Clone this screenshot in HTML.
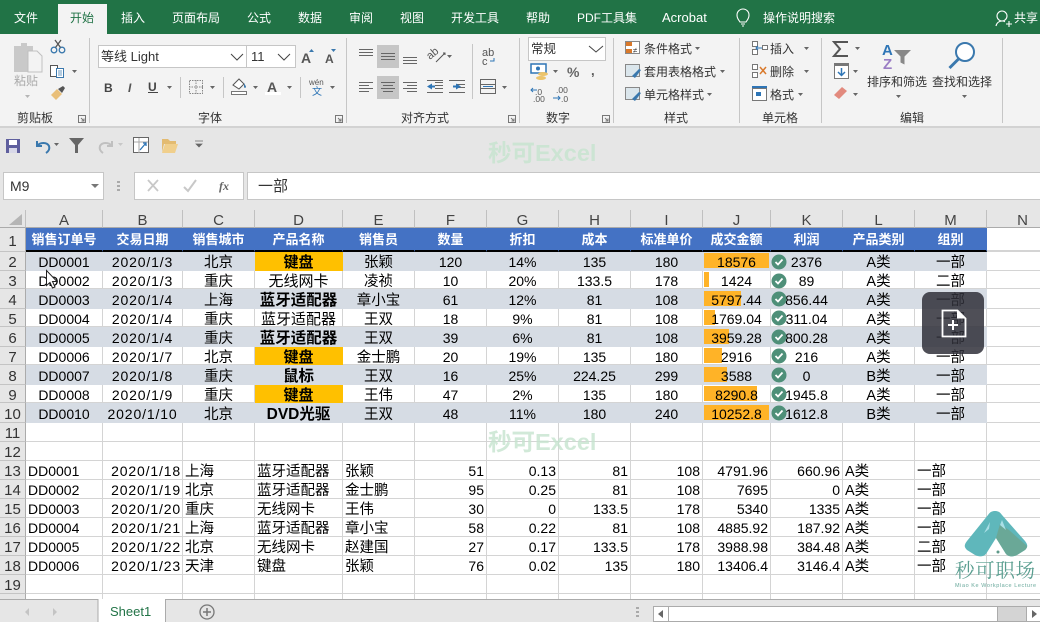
<!DOCTYPE html>
<html lang="zh"><head><meta charset="utf-8"><title>Excel</title>
<style>
html,body{margin:0;padding:0;width:1040px;height:622px;overflow:hidden;background:#fff}
body{position:relative;font-family:"Liberation Sans","Noto Sans CJK SC",sans-serif;color:#000}
svg{position:absolute;left:0;top:0}
svg text{font-family:"Liberation Sans","Noto Sans CJK SC",sans-serif}
#sheet{position:absolute;left:0;top:210px;width:1059px;height:389px;overflow:hidden}
table{border-collapse:separate;border-spacing:0;table-layout:fixed;width:1059px;font-size:14px}
td{padding:2px 0 0;box-sizing:border-box;border-right:1px solid #d4d4d4;border-bottom:1px solid #d4d4d4;line-height:12px;text-align:center;white-space:nowrap;overflow:hidden;vertical-align:middle;font-size:14px}
td.h{background:#e6e6e6;color:#333;border-right:1px solid #ababab;border-bottom:1px solid #c4c4c4;font-size:15px;padding-top:4px}
tr.c td{background:#e6e6e6;color:#444;border-right:1px solid #c0c0c0;border-bottom:1px solid #ababab;font-size:15px;padding-top:4px}
tr.t td{background:#4472c4;color:#fff;font-weight:bold;font-size:13px;border-right-color:#4472c4;border-bottom:2px solid #000}
tr.t td.h{background:#e6e6e6;color:#333;font-weight:normal;font-size:15px;border-right:1px solid #ababab;border-bottom:1px solid #c4c4c4}
tr.g td{background:#d6dce4;border-right-color:#d6dce4;border-bottom-color:#d6dce4}
tr.g td.h{background:#e6e6e6;border-right:1px solid #ababab;border-bottom:1px solid #c4c4c4}
tr.t td.n,tr.g td.n{background:#fff;border-right-color:#d4d4d4;border-bottom-color:#d4d4d4;color:#000;font-weight:normal}
td.o{background:#ffc000!important;border-right-color:#ffc000!important;border-bottom-color:#ffc000!important;font-weight:bold;font-size:15px;padding-top:4px}
td.b{font-weight:bold;font-size:15.5px;padding-top:4px}
td.z{font-size:14.5px;padding-top:4px}
td.y{font-size:15px;padding-top:4px}
td.l{text-align:left;padding-left:2px;font-size:14.5px;padding-top:4px}
td.ln{text-align:left;padding-left:2px}
td.r{text-align:right;padding-right:2px}
td.d{letter-spacing:.85px}
td.r.d{padding-right:1px}
.wm{position:absolute;color:#c6e4cf;font-weight:bold;font-size:23.5px;left:488px;white-space:nowrap;opacity:.8;line-height:26px;z-index:3}
#over{position:absolute;left:922px;top:292px;width:62px;height:62px;border-radius:8px;background:rgba(48,48,58,.85);z-index:6}
#tabs{position:absolute;left:0;top:599px;width:1040px;height:23px;background:#e6e6e6;border-top:1px solid #ababab;box-sizing:border-box;z-index:5}
</style></head><body>

<svg width="1040" height="210" viewBox="0 0 1040 210" style="z-index:1">
<rect width="1040" height="210" fill="#e6e6e6"/>
<rect width="1040" height="34" fill="#217346"/>
<rect y="34" width="1040" height="92" fill="#f3f3f3"/>
<rect y="126" width="1040" height="2" fill="#d2d2d2"/>
<rect x="58" y="4" width="49" height="31" fill="#f3f3f3"/>
<g font-size="12" fill="#fff">
<text x="14" y="22">文件</text><text x="70" y="22" fill="#217346">开始</text><text x="121" y="22">插入</text><text x="172" y="22">页面布局</text><text x="247" y="22">公式</text><text x="298" y="22">数据</text><text x="349" y="22">审阅</text><text x="400" y="22">视图</text><text x="451" y="22">开发工具</text><text x="526" y="22">帮助</text><text x="577" y="22">PDF工具集</text><text x="662" y="22" font-size="13">Acrobat</text><text x="763" y="22">操作说明搜索</text><text x="1014" y="22">共享</text>
</g>
<!-- bulb / user -->
<g fill="none" stroke="#fff" stroke-width="1.1">
<path d="M740 22c-1-2-3-3-3-7a6 6 0 0 1 12 0c0 4-2 5-3 7z"/><path d="M741 24h4M742 26h2"/>
<circle cx="1002" cy="16" r="5"/><path d="M996 26c.5-3 3-5 6-5 1 0 2 .2 3 .7"/><path d="M1006 24h6M1009 21v6"/>
</g>
<!-- separators -->
<g fill="#c6c6c6"><rect x="89" y="38" width="1" height="85"/><rect x="346" y="38" width="1" height="85"/><rect x="519" y="38" width="1" height="85"/><rect x="613" y="38" width="1" height="85"/><rect x="739" y="38" width="1" height="85"/><rect x="821" y="38" width="1" height="85"/><rect x="1002" y="38" width="1" height="85"/>
<rect x="180" y="77" width="1" height="21"/><rect x="223" y="77" width="1" height="21"/><rect x="300" y="77" width="1" height="21"/><rect x="472" y="44" width="1" height="55"/></g>
<!-- group labels -->
<g font-size="12" fill="#333"><text x="17" y="122">剪贴板</text><text x="198" y="122">字体</text><text x="401" y="122">对齐方式</text><text x="546" y="122">数字</text><text x="664" y="122">样式</text><text x="762" y="122">单元格</text><text x="900" y="122">编辑</text></g>
<!-- launchers -->
<g fill="none" stroke="#777" stroke-width="1"><path d="M78.500 115.500h7v7h-7zM81 118l3 3M84 118.500v2.500h-2.500"/><path d="M335.500 115.500h7v7h-7zM338 118l3 3M341 118.500v2.500h-2.500"/><path d="M508.500 115.500h7v7h-7zM511 118l3 3M514 118.500v2.500h-2.500"/><path d="M602.500 115.500h7v7h-7zM605 118l3 3M608 118.500v2.500h-2.500"/></g>
<!-- clipboard -->
<path d="M14 46h7v-3h6v3h6v26H14z" fill="#c9c9c9"/><path d="M28 51h9l5 5v16H28z" fill="#f3f3f3" stroke="#c0c0c0"/>
<text x="14" y="85" font-size="12" fill="#aaa">粘贴</text><path d="M25 95h5l-2.500 3z" fill="#b5b5b5"/>
<g fill="none" stroke="#3a78ad" stroke-width="1.300"><circle cx="54" cy="50" r="2.800"/><circle cx="62" cy="50" r="2.800"/></g><path d="M55.500 47.500L61 40M60.500 47.500L55 40" stroke="#555" stroke-width="1.300"/>
<path d="M50.500 65.500h7v11h-7z" fill="#fff" stroke="#555"/><path d="M56.500 68.500h7v9h-7z" fill="#fff" stroke="#3a78ad"/><path d="M58 71h4M58 73h4M58 75h4" stroke="#3a78ad" stroke-width=".8"/><path d="M72 70h5l-2.500 3z" fill="#666"/>
<path d="M51 95l6-6 5 5-6 6z" fill="#e9bf79"/><path d="M58 89l5-3 2 2-3 5z" fill="#555"/>
<!-- font -->
<rect x="98.500" y="45.500" width="197" height="22" fill="#fff" stroke="#c6c6c6"/><rect x="246" y="46" width="1" height="21" fill="#c6c6c6"/>
<text x="101" y="61" font-size="13" fill="#333">等线 Light</text><text x="251" y="61" font-size="13" fill="#333">11</text>
<path d="M231 54l6 6 6-6M278 54l6 6 6-6" fill="none" stroke="#444"/>
<text x="301" y="63" font-size="14" font-weight="bold" fill="#555">A</text><path d="M309 52l2.500-3 2.500 3z" fill="#3a78ad"/>
<text x="325" y="63" font-size="12" font-weight="bold" fill="#555">A</text><path d="M331 49h5l-2.500 3z" fill="#3a78ad"/>
<text x="104" y="92" font-size="12" font-weight="bold" fill="#444">B</text><text x="128" y="92" font-size="12" font-style="italic" font-weight="bold" fill="#555">I</text><text x="148" y="91" font-size="12" font-weight="bold" fill="#444">U</text><rect x="148" y="92" width="10" height="1" fill="#444"/>
<path d="M167 86h5l-2.500 3zM210 86h5l-2.500 3zM253 86h5l-2.500 3zM287 86h5l-2.500 3zM330 86h5l-2.500 3z" fill="#666"/>
<path d="M189.500 80.500h13v13h-13zM196 80v14M189 87h14" fill="none" stroke="#888" stroke-dasharray="1.500 1"/>
<path d="M233 85l6-6 5 5-5 5z" fill="#fff" stroke="#555"/><path d="M244 83c1 2 2 3 2 4s-2 1-2 0z" fill="#3a78ad"/><rect x="231.500" y="91.500" width="15" height="3" fill="#fff" stroke="#777"/>
<text x="267" y="92" font-size="14" font-weight="bold" fill="#555">A</text><rect x="265" y="92" width="16" height="3" fill="#fff"/>
<text x="309" y="85" font-size="8" fill="#555">wén</text><text x="312" y="95" font-size="10" fill="#2e75b6">文</text>
<!-- alignment -->
<rect x="377" y="45" width="22" height="23" fill="#c6c6c6"/><rect x="377" y="76" width="22" height="23" fill="#c6c6c6"/>
<g stroke="#666" stroke-width="1" fill="none">
<path d="M359 49.500h14M359 52.500h14M359 55.500h14"/><path d="M381 53.500h14M381 56.500h14M381 59.500h14"/><path d="M403 57.500h14M403 60.500h14M403 63.500h14"/>
<path d="M359 82.500h14M359 85.500h10M359 88.500h14M359 91.500h10"/><path d="M381 82.500h14M383 85.500h10M381 88.500h14M383 91.500h10"/><path d="M403 82.500h14M407 85.500h10M403 88.500h14M407 91.500h10"/>
<path d="M435 82.500h8M435 85.500h8M435 88.500h8M427 92.500h16M427 80.500h16"/><path d="M449 80.500h16M457 84.500h8M457 87.500h8M449 92.500h16"/>
<path d="M480.500 79.500h15v14h-15zM480 84.500h16M480 88.500h16"/>
</g>
<path d="M427 86.500l5-3v2h3v2h-3v2z" fill="#2e75b6"/><path d="M455 86.500l-5-3v2h-3v2h3v2z" fill="#2e75b6" transform="translate(6 0)"/>
<path d="M483 86.500h10" stroke="#2e75b6"/>
<text x="0" y="0" font-size="11" fill="#555" transform="translate(430 60) rotate(-40)">ab</text><path d="M436 62l9-9M443 53h2v2" fill="none" stroke="#555"/>
<text x="482" y="56" font-size="11" fill="#555">ab</text><text x="482" y="65" font-size="11" fill="#555">c</text><path d="M494 58v3h-4" fill="none" stroke="#2e75b6"/>
<path d="M447 55h5l-2.500 3zM502 86h5l-2.500 3z" fill="#666"/>
<!-- number -->
<rect x="528.500" y="37.500" width="77" height="23" fill="#fff" stroke="#c6c6c6"/><text x="531" y="53" font-size="12.500" fill="#333">常规</text><path d="M589 46l7 6 7-6" fill="none" stroke="#444"/>
<rect x="531" y="64" width="15" height="9" fill="#fff" stroke="#2e75b6" stroke-width="1.500"/><circle cx="538" cy="68.500" r="2" fill="#2e75b6"/><ellipse cx="543" cy="74" rx="5" ry="2" fill="#ecc46b"/><ellipse cx="541" cy="78" rx="5" ry="2" fill="#ecc46b"/>
<path d="M553 70h5l-2.500 3z" fill="#666"/><text x="567" y="77" font-size="14" font-weight="bold" fill="#666">%</text><text x="591" y="75" font-size="13" font-weight="bold" fill="#555">,</text>
<text x="535" y="95" font-size="8.500" fill="#555">.0</text><text x="533" y="102" font-size="8.500" fill="#555">.00</text><path d="M531 90h6M533 88l-2 2 2 2" fill="none" stroke="#2e75b6"/>
<text x="556" y="93" font-size="8.500" fill="#555">.00</text><text x="561" y="102" font-size="8.500" fill="#555">.0</text><path d="M553 98h7M558 96l2 2-2 2" fill="none" stroke="#2e75b6"/>
<!-- styles -->
<g font-size="12" fill="#333"><text x="644" y="53">条件格式</text><text x="644" y="76">套用表格格式</text><text x="644" y="99">单元格样式</text></g>
<rect x="625.500" y="41.500" width="14" height="12" fill="#fff" stroke="#888"/><rect x="626" y="42" width="6" height="4" fill="#d9792b"/><rect x="626" y="49" width="6" height="4" fill="#d9792b"/><text x="633" y="53" font-size="8" fill="#444">≠</text>
<rect x="625.500" y="64.500" width="14" height="12" fill="#dbe6ec" stroke="#888"/><path d="M632 76l7-7 2 1-6 8z" fill="#3a78ad"/>
<rect x="625.500" y="87.500" width="14" height="12" fill="#dbe6ec" stroke="#888"/><path d="M632 99l7-7 2 1-6 8z" fill="#3a78ad"/>
<path d="M695 47h5l-2.500 3zM720 70h5l-2.500 3zM707 93h5l-2.500 3z" fill="#666"/>
<!-- cells -->
<g font-size="12" fill="#333"><text x="770" y="53">插入</text><text x="770" y="76">删除</text><text x="770" y="99">格式</text></g>
<path d="M752.500 41.500h5v5h-5zM752.500 49.500h5v5h-5zM762.500 45.500h5v4h-5z" fill="#fff" stroke="#777"/><path d="M756 48h6M758 46l-2 2 2 2" fill="none" stroke="#2e75b6"/>
<path d="M752.500 64.500h5v5h-5zM752.500 72.500h5v5h-5z" fill="#fff" stroke="#777"/><path d="M760 67l6 7M766 67l-6 7" stroke="#d9792b" stroke-width="1.500"/>
<rect x="752.500" y="88.500" width="14" height="12" fill="#fff" stroke="#777"/><rect x="752" y="86" width="15" height="2" fill="#2e75b6"/><rect x="756" y="92" width="5" height="4" fill="#2e75b6"/>
<path d="M804 47h5l-2.500 3zM804 70h5l-2.500 3zM798 93h5l-2.500 3z" fill="#666"/>
<!-- editing -->
<path d="M848 42h-14l6 7-6 7h14" fill="none" stroke="#555" stroke-width="2"/>
<rect x="834.500" y="63.500" width="14" height="15" fill="#fff" stroke="#777"/><rect x="834" y="63" width="15" height="3" fill="#777"/><path d="M841.500 68v7M838 72l3.500 3.500 3.500-3.500" fill="none" stroke="#2e75b6" stroke-width="1.500"/>
<path d="M834 95l8-8 5 4-8 8z" fill="#e28a7e"/>
<path d="M855 47h5l-2.500 3zM853 70h5l-2.500 3zM853 93h5l-2.500 3z" fill="#666"/>
<text x="882" y="55" font-size="15" font-weight="bold" fill="#2e75b6">A</text><text x="883" y="69" font-size="15" font-weight="bold" fill="#9a7dc4">Z</text>
<path d="M894 50h17l-6.500 6.500v8l-4-2v-6z" fill="#888"/>
<g font-size="12" fill="#333"><text x="867" y="86">排序和筛选</text><text x="932" y="86">查找和选择</text></g>
<circle cx="965" cy="52" r="9" fill="#fff" stroke="#3a78ad" stroke-width="2"/><path d="M958.500 59l-9 9" stroke="#3a78ad" stroke-width="3"/>
<path d="M896 95h5l-2.500 3zM962 95h5l-2.500 3z" fill="#666"/>
<!-- QAT -->
<path d="M6 139h14v14H6z" fill="#5f5f9e"/><rect x="9" y="140" width="8" height="5" fill="#fff"/><rect x="9" y="148" width="8" height="5" fill="#d8d8e8"/>
<path d="M37 141v5h5M37 146c3-4 10-4 12 0 1 3 0 5-3 7" fill="none" stroke="#3a78ad" stroke-width="2"/><path d="M54 143h5l-2.500 3z" fill="#666"/>
<path d="M69 138h15l-6 7v8h-3v-8z" fill="#666"/>
<path d="M112 141v5h-5M112 146c-3-4-10-4-12 0-1 3 0 5 3 7" fill="none" stroke="#c0c0c0" stroke-width="2"/><path d="M118 143h5l-2.500 3z" fill="#c8c8c8"/>
<rect x="133.500" y="137.500" width="15" height="15" fill="#fff" stroke="#666"/><path d="M134 142h14M139 138v15" stroke="#aaa"/><path d="M140 150l6-7M143 143h3v3" fill="none" stroke="#2e75b6" stroke-width="1.300"/>
<path d="M162 152v-13h6l2 2h6v3h-12z" fill="#e3bb71"/><path d="M162 153l3-9h13l-3 9z" fill="#f0cf8c"/>
<path d="M195 141h8M196 144h6l-3 3z" fill="#666" stroke="#666" stroke-width=".7"/>
<!-- formula bar -->
<rect x="3" y="172" width="100" height="27" fill="#fff"/><rect x="3.500" y="172.500" width="100" height="27" fill="#fff" stroke="#c6c6c6"/><text x="10" y="191" font-size="14" fill="#333">M9</text><path d="M91 184h8l-4 4z" fill="#777"/>
<g fill="#aaa"><rect x="117" y="181" width="3" height="2"/><rect x="117" y="185" width="3" height="2"/><rect x="117" y="189" width="3" height="2"/></g>
<rect x="134.500" y="172.500" width="109" height="27" fill="#fff" stroke="#c6c6c6"/><rect x="247.500" y="172.500" width="800" height="27" fill="#fff" stroke="#c6c6c6"/>
<path d="M148 180l10 11M158 180l-10 11" stroke="#c8c8c8" stroke-width="1.800"/><path d="M184 187l4 4 8-11" fill="none" stroke="#c8c8c8" stroke-width="2"/>
<text x="219" y="190" font-size="12" font-style="italic" font-weight="bold" fill="#666" style="font-family:'Liberation Serif',serif">fx</text>
<text x="258" y="191" font-size="15" fill="#333">一部</text>
</svg>

<div id="sheet" style="z-index:1">
<table>
<colgroup><col style="width:26px"><col style="width:77px"><col style="width:80px"><col style="width:72px"><col style="width:88px"><col style="width:72px"><col style="width:72px"><col style="width:72px"><col style="width:72px"><col style="width:72px"><col style="width:68px"><col style="width:72px"><col style="width:72px"><col style="width:72px"><col style="width:72px"></colgroup>
<tr class="c" style="height:18px"><td></td><td>A</td><td>B</td><td>C</td><td>D</td><td>E</td><td>F</td><td>G</td><td>H</td><td>I</td><td>J</td><td>K</td><td>L</td><td>M</td><td>N</td></tr>
<tr class="t" style="height:24px"><td class="h">1</td><td>销售订单号</td><td>交易日期</td><td>销售城市</td><td>产品名称</td><td>销售员</td><td>数量</td><td>折扣</td><td>成本</td><td>标准单价</td><td>成交金额</td><td>利润</td><td>产品类别</td><td>组别</td><td class="n"></td></tr>
<tr class="g" style="height:19px"><td class="h">2</td><td>DD0001</td><td class="d">2020/1/3</td><td class="z">北京</td><td class="o">键盘</td><td class="z">张颖</td><td>120</td><td>14%</td><td>135</td><td>180</td><td style="background:#d6dce4 linear-gradient(#ffb327,#ffb327) no-repeat 1px 1px/65px 15px">18576</td><td>2376</td><td class="z">A类</td><td class="z">一部</td><td class="n"></td></tr>
<tr style="height:18px"><td class="h">3</td><td>DD0002</td><td class="d">2020/1/3</td><td class="z">重庆</td><td class="y">无线网卡</td><td class="z">凌祯</td><td>10</td><td>20%</td><td>133.5</td><td>178</td><td style="background:#fff linear-gradient(#ffb327,#ffb327) no-repeat 1px 1px/5px 15px">1424</td><td>89</td><td class="z">A类</td><td class="z">二部</td><td></td></tr>
<tr class="g" style="height:20px"><td class="h">4</td><td>DD0003</td><td class="d">2020/1/4</td><td class="z">上海</td><td class="b">蓝牙适配器</td><td class="z">章小宝</td><td>61</td><td>12%</td><td>81</td><td>108</td><td style="background:#d6dce4 linear-gradient(#ffb327,#ffb327) no-repeat 1px 2px/37px 15px">5797.44</td><td>856.44</td><td class="z">A类</td><td class="z">一部</td><td class="n"></td></tr>
<tr style="height:18px"><td class="h">5</td><td>DD0004</td><td class="d">2020/1/4</td><td class="z">重庆</td><td class="y">蓝牙适配器</td><td class="z">王双</td><td>18</td><td>9%</td><td>81</td><td>108</td><td style="background:#fff linear-gradient(#ffb327,#ffb327) no-repeat 1px 1px/11px 15px">1769.04</td><td>311.04</td><td class="z">A类</td><td class="z">一部</td><td></td></tr>
<tr class="g" style="height:20px"><td class="h">6</td><td>DD0005</td><td class="d">2020/1/4</td><td class="z">重庆</td><td class="b">蓝牙适配器</td><td class="z">王双</td><td>39</td><td>6%</td><td>81</td><td>108</td><td style="background:#d6dce4 linear-gradient(#ffb327,#ffb327) no-repeat 1px 2px/25px 15px">3959.28</td><td>800.28</td><td class="z">A类</td><td class="z">一部</td><td class="n"></td></tr>
<tr style="height:18px"><td class="h">7</td><td>DD0006</td><td class="d">2020/1/7</td><td class="z">北京</td><td class="o">键盘</td><td class="z">金士鹏</td><td>20</td><td>19%</td><td>135</td><td>180</td><td style="background:#fff linear-gradient(#ffb327,#ffb327) no-repeat 1px 1px/18px 15px">2916</td><td>216</td><td class="z">A类</td><td class="z">一部</td><td></td></tr>
<tr class="g" style="height:20px"><td class="h">8</td><td>DD0007</td><td class="d">2020/1/8</td><td class="z">重庆</td><td class="b">鼠标</td><td class="z">王双</td><td>16</td><td>25%</td><td>224.25</td><td>299</td><td style="background:#d6dce4 linear-gradient(#ffb327,#ffb327) no-repeat 1px 2px/23px 15px">3588</td><td>0</td><td class="z">B类</td><td class="z">一部</td><td class="n"></td></tr>
<tr style="height:18px"><td class="h">9</td><td>DD0008</td><td class="d">2020/1/9</td><td class="z">重庆</td><td class="o">键盘</td><td class="z">王伟</td><td>47</td><td>2%</td><td>135</td><td>180</td><td style="background:#fff linear-gradient(#ffb327,#ffb327) no-repeat 1px 1px/53px 15px">8290.8</td><td>1945.8</td><td class="z">A类</td><td class="z">一部</td><td></td></tr>
<tr class="g" style="height:20px"><td class="h">10</td><td>DD0010</td><td class="d">2020/1/10</td><td class="z">北京</td><td class="b">DVD光驱</td><td class="z">王双</td><td>48</td><td>11%</td><td>180</td><td>240</td><td style="background:#d6dce4 linear-gradient(#ffb327,#ffb327) no-repeat 1px 2px/65px 15px">10252.8</td><td>1612.8</td><td class="z">B类</td><td class="z">一部</td><td class="n"></td></tr>
<tr style="height:19px"><td class="h">11</td><td></td><td></td><td></td><td></td><td></td><td></td><td></td><td></td><td></td><td></td><td></td><td></td><td></td><td></td></tr>
<tr style="height:19px"><td class="h">12</td><td></td><td></td><td></td><td></td><td></td><td></td><td></td><td></td><td></td><td></td><td></td><td></td><td></td><td></td></tr>
<tr style="height:19px"><td class="h">13</td><td class="ln">DD0001</td><td class="r d">2020/1/18</td><td class="l">上海</td><td class="l">蓝牙适配器</td><td class="l">张颖</td><td class="r">51</td><td class="r">0.13</td><td class="r">81</td><td class="r">108</td><td class="r">4791.96</td><td class="r">660.96</td><td class="l">A类</td><td class="l">一部</td><td></td></tr>
<tr style="height:19px"><td class="h">14</td><td class="ln">DD0002</td><td class="r d">2020/1/19</td><td class="l">北京</td><td class="l">蓝牙适配器</td><td class="l">金士鹏</td><td class="r">95</td><td class="r">0.25</td><td class="r">81</td><td class="r">108</td><td class="r">7695</td><td class="r">0</td><td class="l">A类</td><td class="l">一部</td><td></td></tr>
<tr style="height:19px"><td class="h">15</td><td class="ln">DD0003</td><td class="r d">2020/1/20</td><td class="l">重庆</td><td class="l">无线网卡</td><td class="l">王伟</td><td class="r">30</td><td class="r">0</td><td class="r">133.5</td><td class="r">178</td><td class="r">5340</td><td class="r">1335</td><td class="l">A类</td><td class="l">一部</td><td></td></tr>
<tr style="height:19px"><td class="h">16</td><td class="ln">DD0004</td><td class="r d">2020/1/21</td><td class="l">上海</td><td class="l">蓝牙适配器</td><td class="l">章小宝</td><td class="r">58</td><td class="r">0.22</td><td class="r">81</td><td class="r">108</td><td class="r">4885.92</td><td class="r">187.92</td><td class="l">A类</td><td class="l">一部</td><td></td></tr>
<tr style="height:19px"><td class="h">17</td><td class="ln">DD0005</td><td class="r d">2020/1/22</td><td class="l">北京</td><td class="l">无线网卡</td><td class="l">赵建国</td><td class="r">27</td><td class="r">0.17</td><td class="r">133.5</td><td class="r">178</td><td class="r">3988.98</td><td class="r">384.48</td><td class="l">A类</td><td class="l">二部</td><td></td></tr>
<tr style="height:19px"><td class="h">18</td><td class="ln">DD0006</td><td class="r d">2020/1/23</td><td class="l">天津</td><td class="l">键盘</td><td class="l">张颖</td><td class="r">76</td><td class="r">0.02</td><td class="r">135</td><td class="r">180</td><td class="r">13406.4</td><td class="r">3146.4</td><td class="l">A类</td><td class="l">一部</td><td></td></tr>
<tr style="height:19px"><td class="h">19</td><td></td><td></td><td></td><td></td><td></td><td></td><td></td><td></td><td></td><td></td><td></td><td></td><td></td><td></td></tr>
<tr style="height:6px"><td class="h"></td><td></td><td></td><td></td><td></td><td></td><td></td><td></td><td></td><td></td><td></td><td></td><td></td><td></td><td></td></tr>
</table>
</div>

<svg width="1040" height="622" viewBox="0 0 1040 622" style="z-index:4;pointer-events:none">
<!-- corner triangle -->
<path d="M22 214v11H9z" fill="#b5b5b5"/>
<!-- status icons -->
<g>
<circle cx="779" cy="262" r="7.500" fill="#4e8f78"/><circle cx="779" cy="281" r="7.500" fill="#4e8f78"/><circle cx="779" cy="299" r="7.500" fill="#4e8f78"/><circle cx="779" cy="318" r="7.500" fill="#4e8f78"/><circle cx="779" cy="337" r="7.500" fill="#4e8f78"/><circle cx="779" cy="356" r="7.500" fill="#4e8f78"/><circle cx="779" cy="375" r="7.500" fill="#4e8f78"/><circle cx="779" cy="394" r="7.500" fill="#4e8f78"/><circle cx="779" cy="413" r="7.500" fill="#4e8f78"/>
</g>
<g fill="none" stroke="#fff" stroke-width="1.800">
<path d="M775.500 262l2.500 2.500 4.500-5"/><path d="M775.500 281l2.500 2.500 4.500-5"/><path d="M775.500 299l2.500 2.500 4.500-5"/><path d="M775.500 318l2.500 2.500 4.500-5"/><path d="M775.500 337l2.500 2.500 4.500-5"/><path d="M775.500 356l2.500 2.500 4.500-5"/><path d="M775.500 375l2.500 2.500 4.500-5"/><path d="M775.500 394l2.500 2.500 4.500-5"/><path d="M775.500 413l2.500 2.500 4.500-5"/>
</g>
<!-- cursor -->
<path d="M46.500 270.500v15l3.500-3 2.500 5.500 2.500-1-2.500-5.500h4.500z" fill="#fff" stroke="#222" stroke-width="1"/>
<!-- logo -->
<path d="M995 511c-3 0-5 1-7 4L967 541c-3 4-3 6 0 9l8 5c4 2 8 2 11-1L996 538l10 16c3 3 7 3 11 1l8-5c3-3 3-5 0-9L1002 515c-2-3-4-4-7-4z" fill="#5fb7bb"/>
<path d="M996 538l10 16c3 3 7 3 11 1l8-5c1-1 2-2 2-4l-18-16-9-6z" fill="#6aa897"/>
<path d="M990 522l-6 11 5-4zM1002 520l4 10-6-5z" fill="#a9dfe6"/>
<circle cx="998" cy="552" r="1.500" fill="#5f9a8a"/>
<text x="955" y="577" font-size="19.500" fill="#5a9e90" style="font-family:'Noto Serif CJK SC',serif" textLength="80">秒可职场</text>
<text x="955" y="587" font-size="5.500" fill="#6aa99c" textLength="81">Miao Ke Workplace Lecture</text>
</svg>

<div class="wm" style="top:140px">秒可Excel</div>
<div class="wm" style="top:429px">秒可Excel</div>

<div id="over">
<svg width="62" height="62" viewBox="0 0 62 62"><path d="M20.500 18.500h15l8 8v18h-23z" fill="none" stroke="#fff" stroke-width="1.800"/><path d="M35 18.500v8h8.500z" fill="#fff"/><path d="M26 33h10M31 28v10" stroke="#fff" stroke-width="2"/></svg>
</div>

<div id="tabs">
<svg width="1040" height="23" viewBox="0 0 1040 23" style="top:-1px">
<rect x="98" y="0" width="68" height="23" fill="#fff"/><path d="M98 0v23M165.500 0v23" stroke="#ababab" fill="none"/>
<text x="110" y="17" font-size="13" fill="#217346">Sheet1</text>
<path d="M29 9l-4 4 4 4zM53 9l4 4-4 4z" fill="#c4c4c4"/>
<circle cx="207" cy="13" r="7" fill="none" stroke="#777" stroke-width="1.300"/><path d="M203 13h8M207 9v8" stroke="#777" stroke-width="1.500"/>
<g fill="#aaa"><rect x="636" y="8" width="3" height="2"/><rect x="636" y="12" width="3" height="2"/><rect x="636" y="16" width="3" height="2"/></g>
<rect x="653.500" y="7.500" width="386" height="15" fill="#d4d4d4" stroke="#ababab"/>
<rect x="668.500" y="7.500" width="329" height="15" fill="#fff" stroke="#ababab"/>
<rect x="654" y="8" width="14" height="14" fill="#fff"/><rect x="1027" y="8" width="13" height="14" fill="#fff"/><path d="M1026.500 7v16" stroke="#ababab"/>
<path d="M663 11l-5 4 5 4zM1032 11l5 4-5 4z" fill="#666"/>
</svg>
</div>
</body></html>
